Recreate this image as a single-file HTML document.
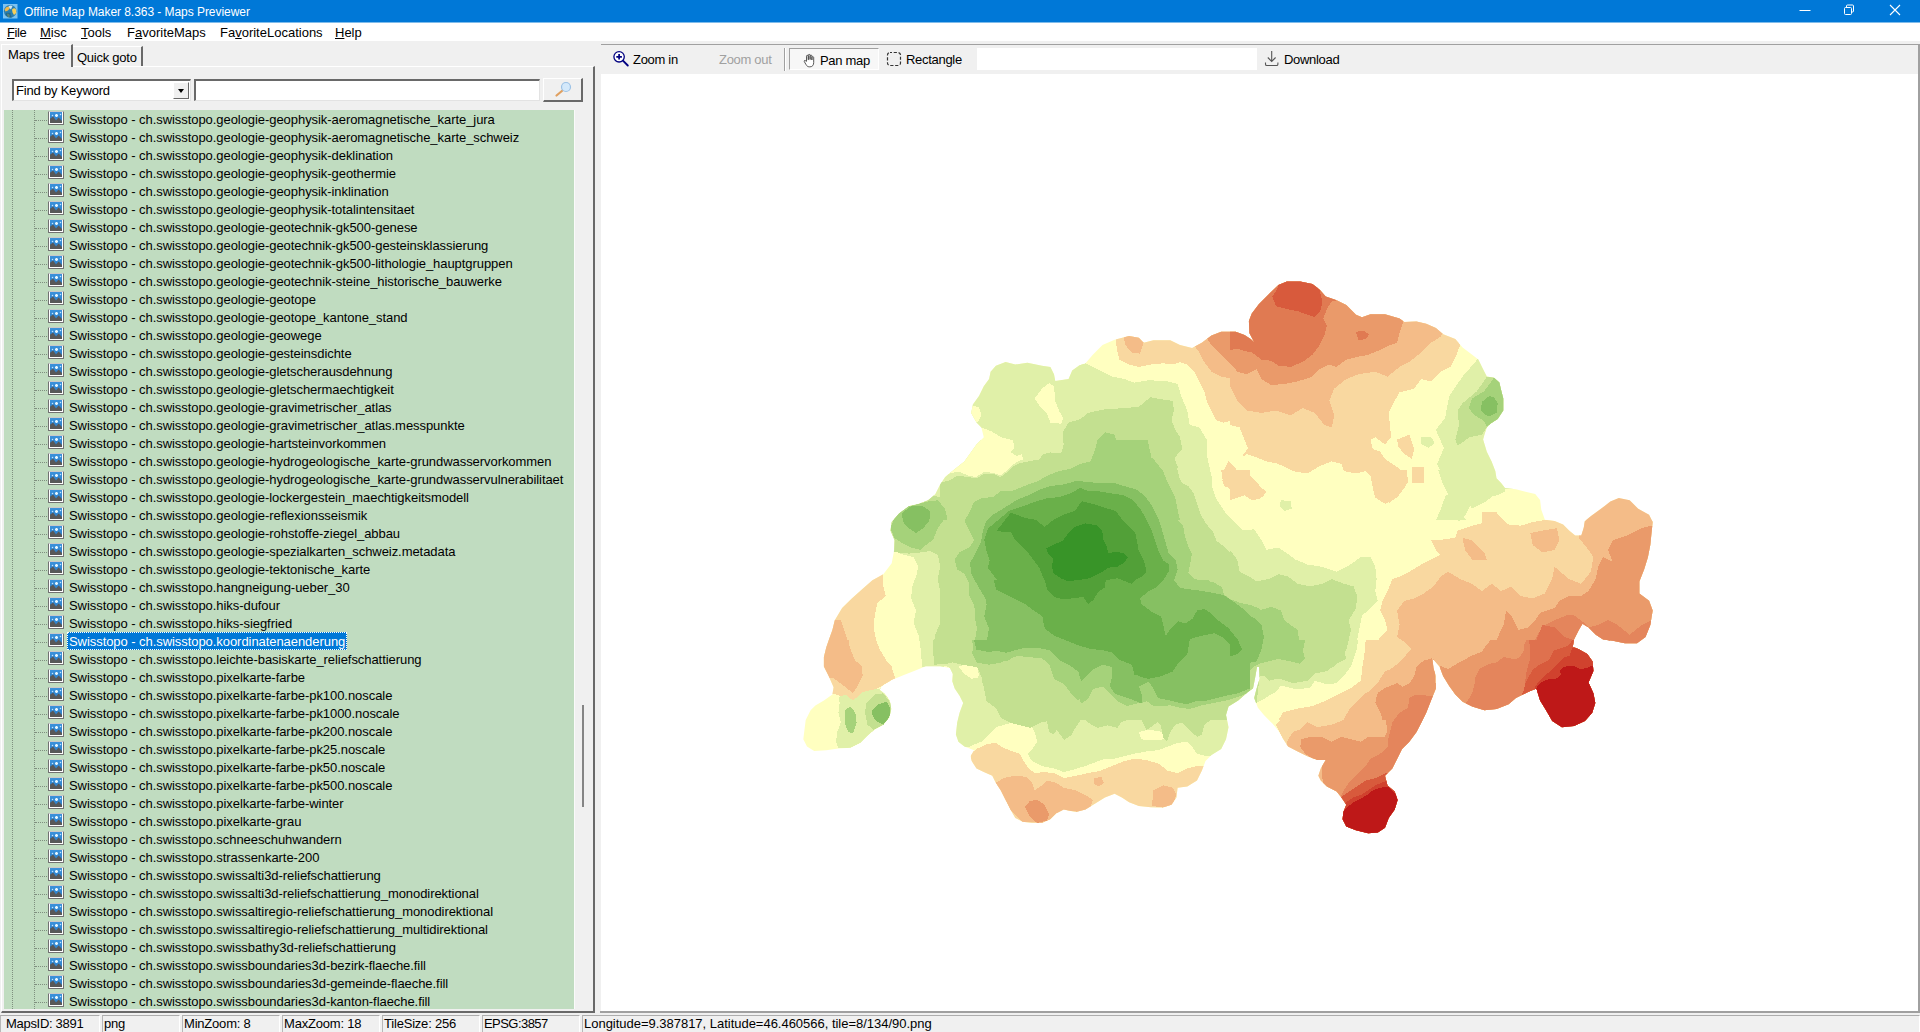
<!DOCTYPE html>
<html lang="en">
<head>
<meta charset="utf-8">
<title>Offline Map Maker 8.363 - Maps Previewer</title>
<style>
*{box-sizing:border-box;margin:0;padding:0}
html,body{width:1920px;height:1032px;overflow:hidden;background:#f0f0f0}
body{position:relative;font-family:"Liberation Sans",sans-serif;font-size:13px;color:#000}
.abs{position:absolute}
#title{left:0;top:0;width:1920px;height:23px;background:#0078d7;border-bottom:1px solid #7fbceb;color:#fff;font-size:12px}
#title .txt{position:absolute;left:24px;top:5px;white-space:nowrap;letter-spacing:-0.05px}
#appico{position:absolute;left:3px;top:3px;width:16px;height:16px}
.wbtn{position:absolute;top:0;height:23px}
#menu{left:0;top:23px;width:1920px;height:18px;background:#fff}
#menu span{position:absolute;top:2px;white-space:nowrap}
#menu u{text-decoration:underline;text-underline-offset:1px}
/* tabs */
#tabpage{left:1px;top:66px;width:594px;height:947px;border-top:1px solid #fff;border-left:1px solid #fff;border-right:2px solid #696969;border-bottom:2px solid #696969}
.tab{position:absolute;white-space:nowrap}
#tab1{left:1px;top:44px;width:72px;height:23px;background:#f0f0f0;border-top:1px solid #fff;border-left:1px solid #fff;border-right:2px solid #696969;}
#tab1 span{position:absolute;left:6px;top:2px;letter-spacing:-0.1px}
#tab2{left:73px;top:46px;width:70px;height:20px;border-top:1px solid #fff;border-right:2px solid #696969}
#tab2 span{position:absolute;left:4px;top:3px;letter-spacing:-0.25px}
#combo{left:12px;top:79px;width:179px;height:22px;background:#fff;border:1px solid #696969;border-top:2px solid #696969;border-left:2px solid #696969;border-right-color:#e3e3e3;border-bottom-color:#e3e3e3}
#combo span{position:absolute;left:2px;top:2px;letter-spacing:-0.2px}
#combo .dd{position:absolute;right:1px;top:1px;width:16px;height:17px;background:#f0f0f0;border:1px solid #fff;border-right-color:#696969;border-bottom-color:#696969}
#combo .dd:after{content:"";position:absolute;left:4px;top:6px;border-left:3.5px solid transparent;border-right:3.5px solid transparent;border-top:4px solid #000}
#kw{left:194px;top:79px;width:346px;height:22px;background:#fff;border:1px solid #e3e3e3;border-top:2px solid #696969;border-left:2px solid #696969}
#sbtn{left:543px;top:78px;width:40px;height:24px;background:#f0f0f0;border:1px solid #fff;border-right:2px solid #696969;border-bottom:2px solid #696969}
#tree{left:4px;top:110px;width:571px;height:899px;background:#c0dcc0;overflow:hidden;border-right:1px solid #fafafa}
#tree .v1{position:absolute;left:8px;top:0;height:899px;border-left:1px dotted #7f8f7f}
#tree .v2{position:absolute;left:30px;top:0;height:899px;border-left:1px dotted #7f8f7f}
.row{position:relative;height:18px;white-space:nowrap}
.row:before{content:"";position:absolute;left:31px;top:10px;width:12px;border-top:1px dotted #7f8f7f}
.row .ic{position:absolute;left:44px;top:1px;width:16px;height:14px;background:#fff;border:1px solid #707070;border-top-color:#c8c8c8;border-radius:1px}
.row .ic:before{content:"";position:absolute;left:1px;top:0;width:12px;height:11px;background:radial-gradient(circle at 2.5px 3.5px,#bfe4ff 0.5px,transparent 1.1px),radial-gradient(circle at 6.5px 3.5px,#e8f8ff 1.1px,transparent 1.7px),radial-gradient(circle at 10.5px 2.5px,#bfe4ff 0.5px,transparent 1.1px),linear-gradient(#3a92dc,#2c7cc4)}
.row .ic:after{content:"";position:absolute;left:1px;top:0;width:12px;height:11px;background:#585858;clip-path:polygon(0 100%,0 62%,26% 42%,50% 78%,72% 50%,100% 82%,100% 100%)}
.row .lbl{position:absolute;left:63px;top:0;height:18px;line-height:19px;padding:0 2px;letter-spacing:-0.06px}
.row.sel .lbl{background:#0078d7;color:#fff;outline:1px dotted #fff;outline-offset:-1px}
#thumb{left:582px;top:705px;width:2px;height:102px;background:#858585}
/* right */
#rtop{left:601px;top:44px;width:1319px;height:2px;background:#a0a0a0;border-bottom:1px solid #e8e8e8}
#tb{left:601px;top:45px;width:1317px;height:29px;background:#f0f0f0}
#tb .t{position:absolute;top:7px;white-space:nowrap;letter-spacing:-0.3px}
#mapbox{left:601px;top:74px;width:1317px;height:937px;background:#fff}
#rb{left:1918px;top:45px;width:2px;height:968px;background:#a0a0a0}
#bb{left:600px;top:1011px;width:1320px;height:2px;background:#a0a0a0}
.sp{position:absolute;top:1015px;height:17px;border-left:1px solid #b8b8b8;border-top:1px solid #adadad;border-right:1px solid #fff;white-space:nowrap;line-height:16px;padding-left:4px;font-size:13px;letter-spacing:-0.2px}

</style>
</head>
<body>
<div id="title" class="abs"><svg id="appico" viewBox="0 0 16 16"><rect x="0" y="1" width="14.500" height="14.500" fill="#7cc3f2"/><circle cx="7.200" cy="8.300" r="6.300" fill="#2a7fb0"/><path d="M1.500 6.500Q3 3.500 5.500 3.500L7 5 5 7.500 2.500 8.500Z" fill="#f0b84a"/><path d="M9 6.500Q11.500 4 13 6.500L13.300 10 11 12 9.500 9.500Z" fill="#f5cf5a"/><path d="M4 10.500l2 .5 1 2-1.500 1.500Q4 13.500 4 10.500Z" fill="#e8d060"/><path d="M5.500 3.200Q7.500 1.800 9.500 3L8 6.500 6.500 5Z" fill="#cfe8f5"/><path d="M2.500 12Q5 15.500 9 14.500 7 12 7.500 10 5 9.500 3 10Z" fill="#1d5f80" opacity=".7"/></svg><span class="txt">Offline Map Maker 8.363 - Maps Previewer</span>
<svg class="wbtn" style="left:1782px" width="46" height="23"><path d="M17.5 10.5h11" stroke="#fff" stroke-width="1"/></svg>
<svg class="wbtn" style="left:1828px" width="46" height="23"><rect x="16.500" y="7.500" width="7" height="7" rx="1" fill="none" stroke="#fff"/><path d="M18.500 7.500v-1.500a1 1 0 0 1 1-1h5a1 1 0 0 1 1 1v5a1 1 0 0 1-1 1h-1" fill="none" stroke="#fff"/></svg>
<svg class="wbtn" style="left:1874px" width="46" height="23"><path d="M16 5l10 10M26 5l-10 10" stroke="#fff" stroke-width="1.100"/></svg>
</div>
<div id="menu" class="abs"><span style="left:7px;letter-spacing:-0.4px"><u>F</u>ile</span><span style="left:40px"><u>M</u>isc</span><span style="left:81px"><u>T</u>ools</span><span style="left:127px">F<u>a</u>voriteMaps</span><span style="left:220px">Fa<u>v</u>oriteLocations</span><span style="left:335px"><u>H</u>elp</span></div>
<div id="tabpage" class="abs"></div>
<div id="tab2" class="abs tab"><span>Quick goto</span></div>
<div id="tab1" class="abs tab"><span>Maps tree</span></div>
<div id="combo" class="abs"><span>Find by Keyword</span><div class="dd"></div></div>
<div id="kw" class="abs"></div>
<div id="sbtn" class="abs"><svg width="37" height="21" viewBox="0 0 37 21"><path d="M12.500 16.500l6-5" stroke="#e0a060" stroke-width="2.200" stroke-linecap="round"/><circle cx="22" cy="8" r="4.500" fill="#d4e9fb" stroke="#9cc2e6" stroke-width="1.200"/></svg></div>
<div id="tree" class="abs"><div class="v1"></div><div class="v2"></div>
<div class="row"><i class="ic"></i><span class="lbl">Swisstopo - ch.swisstopo.geologie-geophysik-aeromagnetische_karte_jura</span></div>
<div class="row"><i class="ic"></i><span class="lbl">Swisstopo - ch.swisstopo.geologie-geophysik-aeromagnetische_karte_schweiz</span></div>
<div class="row"><i class="ic"></i><span class="lbl">Swisstopo - ch.swisstopo.geologie-geophysik-deklination</span></div>
<div class="row"><i class="ic"></i><span class="lbl">Swisstopo - ch.swisstopo.geologie-geophysik-geothermie</span></div>
<div class="row"><i class="ic"></i><span class="lbl">Swisstopo - ch.swisstopo.geologie-geophysik-inklination</span></div>
<div class="row"><i class="ic"></i><span class="lbl">Swisstopo - ch.swisstopo.geologie-geophysik-totalintensitaet</span></div>
<div class="row"><i class="ic"></i><span class="lbl">Swisstopo - ch.swisstopo.geologie-geotechnik-gk500-genese</span></div>
<div class="row"><i class="ic"></i><span class="lbl">Swisstopo - ch.swisstopo.geologie-geotechnik-gk500-gesteinsklassierung</span></div>
<div class="row"><i class="ic"></i><span class="lbl">Swisstopo - ch.swisstopo.geologie-geotechnik-gk500-lithologie_hauptgruppen</span></div>
<div class="row"><i class="ic"></i><span class="lbl">Swisstopo - ch.swisstopo.geologie-geotechnik-steine_historische_bauwerke</span></div>
<div class="row"><i class="ic"></i><span class="lbl">Swisstopo - ch.swisstopo.geologie-geotope</span></div>
<div class="row"><i class="ic"></i><span class="lbl">Swisstopo - ch.swisstopo.geologie-geotope_kantone_stand</span></div>
<div class="row"><i class="ic"></i><span class="lbl">Swisstopo - ch.swisstopo.geologie-geowege</span></div>
<div class="row"><i class="ic"></i><span class="lbl">Swisstopo - ch.swisstopo.geologie-gesteinsdichte</span></div>
<div class="row"><i class="ic"></i><span class="lbl">Swisstopo - ch.swisstopo.geologie-gletscherausdehnung</span></div>
<div class="row"><i class="ic"></i><span class="lbl">Swisstopo - ch.swisstopo.geologie-gletschermaechtigkeit</span></div>
<div class="row"><i class="ic"></i><span class="lbl">Swisstopo - ch.swisstopo.geologie-gravimetrischer_atlas</span></div>
<div class="row"><i class="ic"></i><span class="lbl">Swisstopo - ch.swisstopo.geologie-gravimetrischer_atlas.messpunkte</span></div>
<div class="row"><i class="ic"></i><span class="lbl">Swisstopo - ch.swisstopo.geologie-hartsteinvorkommen</span></div>
<div class="row"><i class="ic"></i><span class="lbl">Swisstopo - ch.swisstopo.geologie-hydrogeologische_karte-grundwasservorkommen</span></div>
<div class="row"><i class="ic"></i><span class="lbl">Swisstopo - ch.swisstopo.geologie-hydrogeologische_karte-grundwasservulnerabilitaet</span></div>
<div class="row"><i class="ic"></i><span class="lbl">Swisstopo - ch.swisstopo.geologie-lockergestein_maechtigkeitsmodell</span></div>
<div class="row"><i class="ic"></i><span class="lbl">Swisstopo - ch.swisstopo.geologie-reflexionsseismik</span></div>
<div class="row"><i class="ic"></i><span class="lbl">Swisstopo - ch.swisstopo.geologie-rohstoffe-ziegel_abbau</span></div>
<div class="row"><i class="ic"></i><span class="lbl">Swisstopo - ch.swisstopo.geologie-spezialkarten_schweiz.metadata</span></div>
<div class="row"><i class="ic"></i><span class="lbl">Swisstopo - ch.swisstopo.geologie-tektonische_karte</span></div>
<div class="row"><i class="ic"></i><span class="lbl">Swisstopo - ch.swisstopo.hangneigung-ueber_30</span></div>
<div class="row"><i class="ic"></i><span class="lbl">Swisstopo - ch.swisstopo.hiks-dufour</span></div>
<div class="row"><i class="ic"></i><span class="lbl">Swisstopo - ch.swisstopo.hiks-siegfried</span></div>
<div class="row sel"><i class="ic"></i><span class="lbl">Swisstopo - ch.swisstopo.koordinatenaenderung</span></div>
<div class="row"><i class="ic"></i><span class="lbl">Swisstopo - ch.swisstopo.leichte-basiskarte_reliefschattierung</span></div>
<div class="row"><i class="ic"></i><span class="lbl">Swisstopo - ch.swisstopo.pixelkarte-farbe</span></div>
<div class="row"><i class="ic"></i><span class="lbl">Swisstopo - ch.swisstopo.pixelkarte-farbe-pk100.noscale</span></div>
<div class="row"><i class="ic"></i><span class="lbl">Swisstopo - ch.swisstopo.pixelkarte-farbe-pk1000.noscale</span></div>
<div class="row"><i class="ic"></i><span class="lbl">Swisstopo - ch.swisstopo.pixelkarte-farbe-pk200.noscale</span></div>
<div class="row"><i class="ic"></i><span class="lbl">Swisstopo - ch.swisstopo.pixelkarte-farbe-pk25.noscale</span></div>
<div class="row"><i class="ic"></i><span class="lbl">Swisstopo - ch.swisstopo.pixelkarte-farbe-pk50.noscale</span></div>
<div class="row"><i class="ic"></i><span class="lbl">Swisstopo - ch.swisstopo.pixelkarte-farbe-pk500.noscale</span></div>
<div class="row"><i class="ic"></i><span class="lbl">Swisstopo - ch.swisstopo.pixelkarte-farbe-winter</span></div>
<div class="row"><i class="ic"></i><span class="lbl">Swisstopo - ch.swisstopo.pixelkarte-grau</span></div>
<div class="row"><i class="ic"></i><span class="lbl">Swisstopo - ch.swisstopo.schneeschuhwandern</span></div>
<div class="row"><i class="ic"></i><span class="lbl">Swisstopo - ch.swisstopo.strassenkarte-200</span></div>
<div class="row"><i class="ic"></i><span class="lbl">Swisstopo - ch.swisstopo.swissalti3d-reliefschattierung</span></div>
<div class="row"><i class="ic"></i><span class="lbl">Swisstopo - ch.swisstopo.swissalti3d-reliefschattierung_monodirektional</span></div>
<div class="row"><i class="ic"></i><span class="lbl">Swisstopo - ch.swisstopo.swissaltiregio-reliefschattierung_monodirektional</span></div>
<div class="row"><i class="ic"></i><span class="lbl">Swisstopo - ch.swisstopo.swissaltiregio-reliefschattierung_multidirektional</span></div>
<div class="row"><i class="ic"></i><span class="lbl">Swisstopo - ch.swisstopo.swissbathy3d-reliefschattierung</span></div>
<div class="row"><i class="ic"></i><span class="lbl">Swisstopo - ch.swisstopo.swissboundaries3d-bezirk-flaeche.fill</span></div>
<div class="row"><i class="ic"></i><span class="lbl">Swisstopo - ch.swisstopo.swissboundaries3d-gemeinde-flaeche.fill</span></div>
<div class="row"><i class="ic"></i><span class="lbl">Swisstopo - ch.swisstopo.swissboundaries3d-kanton-flaeche.fill</span></div>
</div>
<div id="thumb" class="abs"></div>
<div id="rtop" class="abs"></div>
<div id="tb" class="abs">
<svg class="abs" style="left:11px;top:5px" width="18" height="18" viewBox="0 0 18 18"><circle cx="7.100" cy="6.800" r="5.200" fill="#fff" stroke="#000080" stroke-width="1.300"/><path d="M7.100 4v5.600M4.300 6.800h5.600" stroke="#000080" stroke-width="1.700"/><path d="M11.200 10.900l4.600 4.600" stroke="#000080" stroke-width="1.900" stroke-linecap="round"/></svg>
<span class="t" style="left:32px">Zoom in</span>
<span class="t" style="left:118px;color:#a0a0a0">Zoom out</span>
<div class="abs" style="left:183px;top:3px;width:1px;height:23px;background:#a0a0a0"></div>
<div class="abs" style="left:184px;top:3px;width:1px;height:23px;background:#fff"></div>
<div class="abs" style="left:188px;top:3px;width:90px;height:22px;background:#f7f7f7;border-left:1px solid #a0a0a0;border-top:1px solid #a0a0a0;border-right:1px solid #fff;border-bottom:1px solid #fff"></div>
<svg class="abs" style="left:201px;top:8px" width="14" height="15" viewBox="0 0 14 15"><path d="M4.500 8V3.200a.9.900 0 0 1 1.800 0V7M6.300 6.500V2.300a.9.900 0 0 1 1.800 0V6.500M8.100 6.500V3a.9.900 0 0 1 1.800 0V7M9.900 7V4.600a.9.900 0 0 1 1.800 0V9.500c0 2.500-1.200 4.300-3.600 4.300H7.300c-1.600 0-2.400-.8-3.200-2.100L2.300 8.600c-.5-.9.600-1.700 1.300-.9l.9 1.100" fill="#fff" stroke="#444" stroke-width=".9" stroke-linejoin="round"/></svg>
<span class="t" style="left:219px;top:8px">Pan map</span>
<svg class="abs" style="left:285px;top:6px" width="16" height="16" viewBox="0 0 16 16"><rect x="1.500" y="1.500" width="13" height="13" rx="2.500" fill="none" stroke="#333" stroke-width="1.200" stroke-dasharray="3.200 1.700" stroke-dashoffset="1.200"/></svg>
<span class="t" style="left:305px">Rectangle</span>
<div class="abs" style="left:376px;top:3px;width:280px;height:22px;background:#fff"></div>
<svg class="abs" style="left:663px;top:5px" width="16" height="17" viewBox="0 0 16 17"><path d="M7.700 1v10.300M3.800 7.500l3.900 3.900 3.900-3.900" fill="none" stroke="#555" stroke-width="1.100"/><path d="M1.500 12.500v1.700a1.300 1.300 0 0 0 1.300 1.300h9.800a1.300 1.300 0 0 0 1.300-1.300v-1.700" fill="none" stroke="#555" stroke-width="1.100"/></svg>
<span class="t" style="left:683px">Download</span>
</div>
<div id="mapbox" class="abs"><svg width="1317" height="937" viewBox="601 74 1317 937" shape-rendering="crispEdges" style="position:absolute;left:0;top:0">
<defs><clipPath id="ch"><path d="M949.9 473.0L964.4 461.4L976.5 444.4L983.8 437.2L981.4 427.5L976.5 422.6L971.2 412.9L972.9 404.5L979.0 396.0L983.8 386.3L989.1 379.0L990.6 371.7L995.9 365.7L1005.6 362.0L1015.3 364.5L1027.4 362.8L1041.9 365.7L1050.4 366.9L1054.0 374.2L1055.3 381.0L1068.6 379.0L1072.2 370.5L1079.5 365.2L1085.5 363.3L1092.8 354.8L1102.5 345.1L1114.6 339.8L1129.1 335.9L1138.8 337.8L1143.7 342.7L1153.4 340.3L1170.3 340.3L1180.0 345.1L1192.1 348.0L1201.8 342.7L1211.5 335.4L1221.2 331.8L1235.7 331.8L1244.5 335.0L1250.6 339.0L1254.2 342.2L1249.4 333.0L1248.9 320.9L1251.8 313.6L1259.0 303.9L1270.0 293.0L1278.4 285.0L1286.9 281.4L1300.2 281.4L1312.4 284.0L1319.6 289.4L1325.7 296.6L1336.6 300.3L1346.3 305.1L1356.0 314.8L1362.0 317.2L1370.5 314.3L1385.0 314.3L1399.6 318.4L1404.4 322.1L1416.5 321.4L1426.2 323.8L1435.9 328.1L1443.2 334.2L1455.3 339.0L1462.6 347.5L1472.2 354.8L1478.3 359.6L1483.1 369.3L1486.8 376.6L1494.0 377.8L1499.4 382.6L1500.8 388.7L1503.3 398.4L1503.3 410.5L1497.7 419.0L1490.4 423.8L1486.8 427.5L1484.4 434.7L1483.1 439.6L1486.8 451.7L1491.6 461.4L1495.3 471.1L1496.5 478.3L1501.3 483.2L1505.0 488.0L1515.9 489.2L1525.5 491.7L1535.2 494.1L1540.1 500.1L1541.3 509.8L1544.9 519.7L1554.6 520.9L1563.1 524.5L1569.1 530.6L1575.2 535.4L1581.3 535.4L1583.7 528.1L1584.9 520.9L1591.0 516.0L1604.3 506.3L1610.3 501.5L1618.8 497.9L1629.7 500.3L1638.2 508.8L1649.1 514.8L1652.7 522.1L1651.5 533.0L1650.3 545.1L1647.9 557.2L1644.2 569.3L1639.4 581.4L1639.4 593.5L1649.1 600.8L1652.7 610.5L1650.3 625.0L1645.5 637.1L1637.0 643.2L1624.9 643.2L1612.8 640.8L1603.1 639.6L1595.8 634.7L1588.5 627.5L1582.5 623.8L1578.8 629.9L1574.0 639.6L1572.8 646.8L1578.8 649.3L1587.3 654.1L1592.6 661.4L1593.4 671.1L1588.5 682.4L1593.4 693.3L1595.3 703.0L1592.2 712.7L1584.9 721.1L1574.0 726.0L1561.9 727.2L1552.2 721.1L1546.1 710.2L1540.1 700.6L1536.4 688.4L1528.0 692.1L1515.9 698.1L1508.6 704.2L1496.5 709.0L1484.4 710.2L1472.2 706.6L1462.6 701.8L1455.3 694.5L1449.2 686.0L1443.2 676.3L1439.5 666.6L1432.3 658.2L1433.5 668.0L1435.9 676.3L1435.9 688.4L1431.0 700.6L1426.2 712.7L1421.4 722.4L1416.5 732.0L1409.3 741.7L1402.0 749.0L1397.2 758.7L1392.3 768.4L1385.0 775.7L1387.5 785.4L1394.7 791.4L1397.6 799.9L1394.7 809.6L1388.7 818.0L1385.0 827.7L1377.8 832.6L1368.1 833.3L1356.0 830.2L1346.3 826.5L1342.6 819.3L1343.4 812.0L1346.3 804.7L1341.4 797.5L1336.6 791.4L1326.9 786.6L1320.8 780.5L1318.4 775.7L1320.8 768.4L1325.7 759.9L1317.2 759.9L1307.5 756.3L1297.8 751.4L1288.1 746.6L1283.3 739.3L1278.4 730.8L1272.4 723.6L1263.9 715.1L1257.9 707.8L1254.2 698.1L1256.6 688.4L1259.6 678.8L1259.0 667.0L1257.0 667.0L1255.4 676.3L1253.0 688.4L1247.9 692.1L1238.2 700.6L1228.5 706.6L1226.0 715.1L1228.5 727.2L1226.0 739.3L1221.2 749.0L1211.5 755.1L1205.5 761.1L1201.8 770.8L1197.0 780.5L1187.3 786.6L1177.6 787.8L1176.4 797.5L1171.5 804.7L1163.1 807.6L1150.9 807.2L1138.8 805.9L1129.1 802.3L1121.9 797.5L1114.6 793.8L1104.9 797.5L1095.2 803.5L1085.5 809.6L1075.8 812.0L1063.7 809.6L1056.5 813.2L1050.4 819.3L1041.9 822.9L1032.2 822.9L1022.6 821.7L1015.3 818.0L1010.4 809.6L1005.6 799.9L1000.7 790.2L995.9 782.9L992.3 775.7L983.8 772.0L976.5 768.4L971.7 761.1L970.5 756.3L974.1 750.2L964.4 746.6L958.4 741.7L955.9 734.5L957.2 722.4L959.6 712.7L963.2 703.0L959.6 695.7L954.7 688.4L952.3 681.2L952.8 673.9L949.9 667.9L940.2 666.2L925.7 666.2L916.0 670.3L903.9 675.1L891.7 680.0L882.1 686.0L879.6 689.7L885.7 694.5L889.8 700.6L891.3 709.0L889.3 717.5L883.3 724.8L874.8 729.6L867.5 735.7L860.3 743.0L850.6 747.8L838.4 748.5L826.3 750.2L814.2 751.0L807.0 746.6L803.3 739.3L804.5 729.6L805.7 719.9L810.6 710.2L815.4 705.4L823.9 700.6L832.4 694.5L833.6 687.2L828.8 676.3L823.9 666.6L823.9 657.0L826.3 647.3L828.8 640.0L832.4 629.9L834.8 620.2L842.1 608.1L851.8 598.4L862.7 588.7L872.4 580.2L883.3 574.2L891.7 563.3L894.2 550.0L894.6 540.3L890.5 530.6L891.7 522.1L899.0 513.6L908.7 506.3L918.4 503.9L928.1 500.3L935.3 494.2L940.2 484.5L945.0 477.3Z"/></clipPath></defs>
<g clip-path="url(#ch)">
<rect x="790" y="270" width="880" height="580" fill="#ffffc0"/>
<path fill="#f9d8a0" d="M1230.0 270.0L1351.1 270.0L1457.7 318.4L1457.7 340.2L1460.1 345.1L1456.5 354.8L1450.4 366.9L1440.7 371.7L1431.1 381.4L1421.4 379.0L1414.1 388.7L1399.6 392.3L1394.7 400.8L1388.7 412.9L1389.9 425.0L1391.1 437.1L1385.0 444.4L1375.3 437.1L1370.5 439.6L1372.9 449.3L1380.2 451.7L1385.0 458.9L1392.3 463.8L1399.6 468.6L1406.8 478.3L1404.4 488.0L1397.1 497.7L1385.0 503.8L1375.3 497.7L1372.9 488.0L1370.5 475.9L1365.7 471.1L1356.0 473.5L1343.8 471.1L1341.4 463.8L1331.7 461.4L1319.6 466.2L1307.5 473.5L1293.0 471.1L1278.4 463.8L1266.3 461.4L1254.2 456.5L1247.0 454.1L1243.3 456.5L1248.2 449.3L1244.5 439.6L1239.7 427.5L1230.0 425.0Z M1230.0 471.1L1237.3 475.9L1244.5 483.2L1254.2 488.0L1263.9 491.6L1259.1 498.9L1251.8 500.1L1244.5 495.3L1237.3 497.7L1230.0 500.1Z M1397.1 439.6L1409.3 434.7L1414.1 449.3L1411.7 458.9L1404.4 454.1L1398.4 446.8Z M1411.7 467.4L1423.8 467.4L1423.8 483.2L1411.7 483.2Z M1481.9 512.2L1496.5 512.2L1498.9 520.0L1481.9 520.0Z M1690.0 519.7L1690.0 720.0L1278.4 720.0L1283.3 712.2L1297.8 708.6L1312.4 706.2L1326.9 700.1L1341.4 692.9L1351.1 688.0L1360.8 680.7L1365.7 673.5L1365.7 663.8L1370.5 654.1L1375.3 644.4L1380.2 637.1L1387.5 629.9L1385.0 620.2L1380.2 610.5L1382.6 600.8L1387.5 591.1L1392.3 579.0L1399.6 576.6L1409.3 571.7L1421.4 564.5L1431.1 559.6L1440.7 554.8L1435.9 549.9L1431.1 540.2L1438.3 540.2L1455.3 537.8L1457.7 530.6L1472.2 525.7L1481.9 523.3L1483.1 513.6L1496.5 513.6L1508.6 524.5L1520.7 525.7L1532.8 522.1L1547.3 519.7Z M1230.0 470.0L1244.5 470.0L1254.2 479.7L1265.1 491.8L1259.1 499.1L1251.8 495.4L1244.5 489.4L1237.3 487.0L1230.0 484.5Z M1370.5 470.0L1406.8 470.0L1408.0 482.1L1399.6 494.2L1389.9 502.7L1377.8 499.1L1372.9 489.4L1371.7 479.7Z M1411.7 470.0L1423.8 470.0L1423.8 482.1L1411.7 482.1Z M1690.0 640.0L1690.0 890.0L1254.2 890.0L1282.1 736.9L1276.0 724.8L1280.9 719.9L1288.1 712.7L1300.2 717.5L1309.9 715.1L1322.0 710.2L1331.7 703.0L1341.4 695.7L1351.1 688.4L1360.8 683.6L1362.0 669.1L1364.4 654.5L1365.7 640.0Z M876.0 640.0L877.2 649.7L884.5 659.4L891.7 666.6L894.6 677.5L882.0 686.0L874.8 689.7L865.1 692.1L860.2 699.3L853.0 700.6L843.3 695.7L834.8 692.1L814.2 688.4L814.2 640.0Z M970.5 753.8L976.5 749.0L986.2 744.2L995.9 742.9L1003.2 747.8L1012.9 751.4L1020.1 753.8L1023.8 761.1L1028.6 768.4L1034.7 773.2L1044.3 772.0L1054.0 773.2L1063.7 778.1L1075.8 775.7L1087.9 773.2L1100.1 770.8L1112.2 766.0L1124.3 761.1L1134.0 758.7L1146.1 759.9L1158.2 763.5L1167.9 770.8L1177.6 773.2L1187.3 768.4L1197.0 766.0L1204.2 766.0L1204.2 833.8L970.5 833.8Z M883.3 572.9L883.3 586.3L885.7 596.0L877.2 603.2L874.8 615.3L873.6 627.5L876.0 639.6L879.6 649.3L886.9 661.4L892.9 671.1L895.4 678.3L882.0 685.6L862.7 692.9L850.6 698.9L838.4 695.3L814.2 688.0L814.2 572.9Z M1250.0 470.0L1250.0 496.6L1243.0 494.2L1233.3 489.4L1223.6 482.1L1221.2 470.0Z M1114.6 270.0L1250.0 270.0L1250.0 420.2L1243.0 417.8L1233.3 420.2L1223.6 422.6L1216.3 420.2L1211.5 410.5L1206.6 400.8L1204.2 391.1L1199.4 381.4L1194.5 371.7L1187.3 364.5L1180.0 362.0L1172.7 364.5L1163.0 363.3L1150.9 364.5L1138.8 366.9L1129.1 364.5L1119.4 359.6L1117.0 349.9L1115.8 340.2Z M1223.6 471.1L1228.4 461.4L1235.7 468.6L1243.0 478.3L1250.0 483.2L1250.0 495.3L1238.1 492.9L1228.4 488.0L1222.4 480.7Z M1280.0 440.0L1280.0 464.8L1269.9 459.5L1259.2 454.2L1248.6 452.4L1241.5 456.8L1247.7 448.9L1247.7 440.0Z M1222.0 475.5L1227.3 463.1L1232.6 471.9L1239.7 479.0L1248.6 484.3L1259.2 486.1L1266.3 491.4L1262.8 496.8L1253.9 500.3L1248.6 493.2L1239.7 491.4L1230.9 487.9L1223.8 486.1Z"/>
<path fill="#f4bc88" d="M1581.2 520.0L1603.0 500.1L1620.0 492.9L1641.8 502.5L1656.3 520.0Z M1230.0 270.0L1351.1 270.0L1443.2 306.3L1443.2 333.0L1440.7 336.6L1431.1 342.7L1421.4 352.4L1409.3 362.0L1399.6 366.9L1387.5 376.6L1375.3 371.7L1358.4 374.2L1346.3 379.0L1334.2 388.7L1329.3 400.8L1334.2 415.3L1331.7 427.5L1324.5 425.0L1314.8 412.9L1302.7 408.1L1290.6 415.3L1276.0 410.5L1261.5 412.9L1247.0 410.5L1237.3 400.8L1230.0 386.3Z M1617.6 494.2L1690.0 494.2L1690.0 720.0L1346.3 720.0L1348.7 709.8L1356.0 702.5L1365.7 695.3L1377.8 683.2L1385.0 671.1L1394.7 668.6L1404.4 658.9L1411.7 649.3L1404.4 642.0L1397.1 637.1L1399.6 625.0L1397.1 610.5L1404.4 600.8L1414.1 598.4L1423.8 593.5L1433.5 586.3L1440.7 576.6L1448.0 571.7L1460.1 579.0L1472.2 583.8L1481.9 591.1L1491.6 583.8L1501.3 591.1L1511.0 586.3L1520.7 596.0L1532.8 598.4L1544.9 593.5L1552.2 579.0L1554.6 566.9L1569.1 579.0L1581.2 583.8L1590.9 571.7L1593.3 557.2L1588.5 549.9L1578.8 537.8L1583.7 522.1Z M1462.5 537.8L1472.2 540.2L1484.3 552.4L1486.8 559.6L1472.2 559.6L1465.0 549.9Z M1530.4 533.0L1542.5 530.6L1557.0 528.1L1559.4 540.2L1554.6 549.9L1542.5 552.4L1532.8 545.1Z M1690.0 640.0L1690.0 890.0L1285.7 890.0L1285.7 746.6L1288.1 739.3L1293.0 732.0L1300.2 729.6L1307.5 722.4L1317.2 727.2L1331.7 724.8L1343.8 719.9L1348.7 710.2L1356.0 703.0L1365.7 693.3L1375.3 688.4L1380.2 678.8L1387.5 671.5L1397.1 664.2L1404.4 657.0L1410.5 649.7L1411.7 640.0Z M826.3 640.0L849.3 640.0L848.1 649.7L853.0 659.4L860.2 664.2L861.5 673.9L857.8 683.6L853.0 690.9L845.7 686.0L838.4 678.8L828.8 671.5L822.7 664.2L823.9 652.1Z M995.9 782.9L1003.2 778.1L1015.3 775.7L1026.2 776.9L1032.2 782.9L1034.7 790.2L1041.9 785.3L1046.8 780.5L1056.5 782.9L1063.7 787.8L1075.8 790.2L1085.5 795.0L1092.8 799.9L1090.4 807.1L1080.7 812.0L1068.6 810.8L1056.5 813.2L1050.4 819.3L1041.9 822.9L1022.5 821.7L1010.4 809.6Z M1153.3 790.2L1163.0 785.3L1172.7 787.8L1176.4 795.0L1172.7 804.7L1163.0 807.6L1152.1 805.9Z M1094.0 778.1L1101.3 776.9L1103.7 782.9L1098.8 786.6L1094.0 784.1Z M814.2 620.2L840.9 620.2L845.7 634.7L850.6 649.3L855.4 661.4L861.5 666.2L862.7 675.9L857.8 685.6L853.0 692.9L843.3 685.6L833.6 678.3L814.2 678.3Z M1138.8 335.4L1143.7 342.7L1140.0 353.6L1131.5 352.4L1125.5 345.1L1123.1 335.4Z M1192.1 318.4L1250.0 318.4L1250.0 405.7L1243.0 400.8L1238.1 391.1L1233.3 379.0L1221.2 376.6L1211.5 371.7L1204.2 362.0L1199.4 352.4L1192.1 342.7Z"/>
<path fill="#ea9a6a" d="M1230.0 270.0L1326.9 270.0L1403.2 294.2L1403.2 320.9L1402.0 325.7L1399.6 333.0L1397.1 342.7L1389.9 345.1L1380.2 349.9L1368.1 354.8L1356.0 357.2L1346.3 359.6L1336.6 366.9L1329.3 364.5L1319.6 369.3L1312.4 376.6L1297.8 381.4L1285.7 383.8L1271.2 385.1L1261.5 379.0L1256.6 369.3L1247.0 374.2L1237.3 371.7L1230.0 362.0Z M1690.0 525.7L1690.0 720.0L1448.0 720.0L1443.2 680.7L1445.6 673.5L1452.9 668.6L1460.1 663.8L1469.8 656.5L1481.9 651.7L1486.8 644.4L1496.5 639.6L1503.7 625.0L1506.1 610.5L1511.0 615.3L1518.3 629.9L1527.9 627.5L1535.2 620.2L1540.1 612.9L1554.6 608.1L1559.4 600.8L1569.1 596.0L1581.2 596.0L1588.5 591.1L1595.8 579.0L1598.2 566.9L1603.0 557.2L1612.7 562.0L1607.9 549.9L1612.7 540.2L1627.3 535.4L1641.8 528.1L1651.5 525.7Z M1435.9 688.0L1435.9 720.0L1382.6 720.0L1380.2 712.2L1375.3 702.5L1377.8 692.9L1385.0 688.0L1397.1 683.2L1404.4 688.0L1414.1 683.2L1416.5 671.1L1423.8 661.4L1433.5 658.9Z M1432.3 658.2L1435.9 688.4L1438.3 890.0L1325.7 890.0L1322.0 761.1L1312.4 758.7L1305.1 753.8L1300.2 746.6L1301.5 739.3L1309.9 736.9L1322.0 736.9L1331.7 741.7L1341.4 736.9L1351.1 739.3L1360.8 741.7L1368.1 736.9L1377.8 736.9L1385.0 736.9L1387.5 729.6L1385.0 717.5L1380.2 707.8L1375.3 698.1L1380.2 692.1L1389.9 693.3L1399.6 688.4L1409.3 683.6L1414.1 676.3L1416.5 666.6L1423.8 660.6Z M1439.5 665.4L1448.0 669.1L1460.1 661.8L1469.8 657.0L1481.9 652.1L1490.4 640.0L1690.0 640.0L1690.0 761.1L1440.7 761.1Z M1025.0 807.1L1029.8 801.1L1037.1 799.9L1044.3 804.7L1049.2 814.4L1046.8 820.5L1037.1 822.9L1029.8 816.8Z M1206.6 318.4L1250.0 318.4L1250.0 371.7L1240.6 369.3L1233.3 366.9L1226.0 359.6L1218.8 352.4L1211.5 345.1L1206.6 337.8Z"/>
<path fill="#e4855c" d="M1690.0 620.2L1690.0 720.0L1472.2 720.0L1466.2 706.2L1469.8 697.7L1474.7 688.0L1474.7 678.3L1479.5 668.6L1489.2 663.8L1501.3 661.4L1515.8 663.8L1523.1 651.7L1532.8 644.4L1537.6 634.7L1544.9 625.0L1554.6 620.2L1566.7 615.3L1574.0 615.3L1583.7 622.6L1588.5 627.5L1598.2 625.0L1607.9 620.2L1617.6 625.0L1629.7 634.7L1641.8 625.0L1651.5 620.2Z M1428.6 720.0L1406.8 720.0L1410.5 702.5L1416.5 695.3L1423.8 696.5L1435.9 697.7Z M1438.3 890.0L1340.2 890.0L1340.2 797.5L1343.8 790.2L1348.7 782.9L1356.0 775.7L1365.7 766.0L1370.5 758.7L1380.2 753.8L1387.5 746.6L1388.7 736.9L1392.3 722.4L1399.6 712.7L1408.0 707.8L1409.3 698.1L1416.5 694.5L1423.8 695.2L1438.3 696.9Z M1466.2 703.0L1472.2 693.3L1474.7 683.6L1477.1 676.3L1484.3 669.1L1494.0 664.2L1503.7 657.0L1515.8 659.4L1523.1 654.5L1524.3 644.8L1526.7 640.0L1690.0 640.0L1690.0 761.1L1466.2 761.1Z"/>
<path fill="#e07a52" d="M1230.0 270.0L1278.4 270.0L1336.6 282.1L1336.6 300.3L1331.7 301.5L1326.9 308.8L1323.3 318.4L1326.9 325.7L1324.5 335.4L1319.6 345.1L1312.4 354.8L1302.7 362.0L1290.6 366.9L1278.4 365.7L1271.2 360.8L1261.5 359.6L1251.8 352.4L1239.7 348.7L1230.0 349.9Z M1356.0 331.8L1363.2 330.6L1369.3 334.2L1365.7 339.0L1358.4 340.2Z M1238.1 318.4L1250.0 318.4L1250.0 352.4L1240.6 349.9L1238.1 340.2L1238.1 330.6Z"/>
<path fill="#df714e" d="M1593.3 639.6L1593.3 720.0L1520.7 720.0L1524.3 688.0L1526.7 671.1L1529.2 661.4L1534.0 649.3L1537.6 637.1L1542.5 625.0L1554.6 627.5L1564.3 637.1L1572.8 639.6Z M1593.3 640.0L1593.3 688.4L1536.4 688.4L1532.8 678.8L1529.2 666.6L1530.4 654.5L1529.2 640.0Z"/>
<path fill="#d85a3c" d="M1272.4 296.6L1278.4 287.0L1278.4 277.3L1312.4 277.3L1319.6 290.6L1322.5 301.5L1320.8 310.0L1314.8 317.2L1307.5 314.8L1297.8 311.2L1285.7 308.8L1276.0 306.3Z M1610.0 640.0L1600.0 740.0L1520.0 700.0L1523.5 690.6L1525.3 683.6L1528.8 676.6L1533.0 669.6L1538.4 665.3L1543.6 662.7L1548.8 660.0L1551.4 654.8L1554.0 650.5L1559.3 648.7L1564.5 647.0L1568.9 645.2L1572.4 640.0Z M1423.8 773.2L1423.8 858.0L1339.0 858.0L1339.0 799.9L1343.8 795.0L1351.1 790.2L1358.4 785.3L1365.7 780.5L1375.3 778.1L1386.2 773.2Z"/>
<path fill="#d0422e" d="M1600.0 648.0L1600.0 730.0L1535.0 730.0L1533.0 695.0L1535.0 687.0L1539.2 681.0L1543.6 676.6L1548.8 672.3L1552.3 668.8L1555.8 665.3L1561.0 660.0L1564.5 657.4L1569.7 655.7L1572.4 648.0Z M1423.8 780.5L1423.8 858.0L1341.4 858.0L1341.4 807.1L1346.3 802.3L1353.5 797.5L1360.8 795.0L1368.1 790.2L1375.3 785.3L1387.5 780.5Z"/>
<path fill="#be1818" d="M1600.0 665.0L1600.0 730.0L1535.0 730.0L1535.0 690.0L1537.5 686.0L1541.8 681.8L1548.8 679.2L1556.7 678.4L1561.0 675.0L1560.0 670.5L1563.0 667.0L1568.0 666.0L1574.0 666.0L1580.0 669.0L1587.0 668.0L1594.0 665.0Z M1423.8 795.0L1423.8 858.0L1341.4 858.0L1341.4 812.5L1347.5 807.1L1353.5 802.3L1360.8 798.7L1366.9 795.0L1372.9 790.2L1380.2 787.8L1387.5 786.6L1397.1 795.0Z"/>
<path fill="#e0f0a8" d="M1544.9 358.4L1544.9 488.0L1504.9 489.2L1494.0 495.3L1484.3 502.5L1472.2 508.6L1468.6 503.8L1469.8 491.6L1458.9 484.4L1444.4 478.3L1437.1 463.8L1443.9 448.0L1435.9 429.9L1445.1 417.8L1449.2 396.0L1462.5 376.6L1478.3 358.4Z M1435.9 520.0L1440.7 509.8L1445.6 495.3L1450.4 495.3L1452.9 506.2L1460.1 511.0L1466.2 520.0Z M1421.4 437.1L1431.1 437.1L1434.7 443.2L1428.6 448.0L1421.4 444.4Z M1280.9 500.1L1290.6 501.3L1291.8 508.6L1284.5 511.0L1279.7 506.2Z M1230.0 524.5L1242.1 530.6L1254.2 529.3L1261.5 540.2L1266.3 549.9L1278.4 547.5L1285.7 552.4L1295.4 559.6L1307.5 564.5L1322.0 566.9L1336.6 571.7L1348.7 565.7L1360.8 557.2L1370.5 557.2L1375.3 566.9L1376.6 579.0L1375.3 591.1L1377.8 600.8L1368.1 610.5L1362.0 615.3L1359.6 627.5L1357.2 639.6L1356.0 651.7L1351.1 666.2L1343.8 675.9L1336.6 683.2L1326.9 684.4L1314.8 680.7L1309.9 688.0L1295.4 689.2L1280.9 685.6L1276.0 691.6L1263.9 698.9L1256.6 702.5L1254.2 712.2L1257.9 720.0L1230.0 720.0Z M1438.3 470.0L1496.5 470.0L1503.7 482.1L1504.9 491.8L1494.0 496.6L1486.8 494.2L1481.9 501.5L1469.8 506.3L1465.0 516.0L1460.1 520.9L1448.0 518.4L1440.7 513.6L1443.2 503.9L1448.0 494.2L1443.2 484.5L1440.7 477.3Z M1358.4 640.0L1356.0 652.1L1351.1 664.2L1343.8 673.9L1334.2 678.8L1326.9 676.3L1317.2 678.8L1309.9 686.0L1302.7 688.4L1293.0 687.2L1280.9 683.6L1276.0 690.9L1266.3 695.7L1256.6 700.6L1254.2 707.8L1230.0 712.7L1230.0 640.0Z M1250.0 640.0L1250.0 756.3L1206.6 756.3L1197.0 753.8L1192.1 746.6L1187.3 741.7L1177.6 742.9L1167.9 746.6L1158.2 750.2L1146.1 751.4L1134.0 753.8L1124.3 756.3L1114.6 758.7L1104.9 758.7L1095.2 762.3L1085.5 766.0L1073.4 769.6L1063.7 772.0L1054.0 768.4L1041.9 766.0L1032.2 761.1L1027.4 753.8L1032.2 749.0L1037.1 741.7L1034.7 732.0L1029.8 723.6L1020.1 722.4L1008.0 723.6L995.9 727.2L988.6 734.5L981.4 741.7L969.3 746.6L959.6 746.6L957.1 744.2L935.3 712.7L949.9 667.1L935.3 664.2L922.0 663.0L920.8 652.1L920.8 640.0Z M838.4 696.9L845.7 694.5L853.0 700.6L862.7 692.1L872.4 689.7L880.8 688.4L891.7 703.0L891.7 717.5L884.5 726.0L874.8 729.6L867.5 735.7L860.2 742.9L850.6 747.8L838.4 748.5L836.0 741.7L837.2 732.0L840.9 722.4L838.4 712.7L839.7 703.0Z M1206.6 470.0L1209.1 484.5L1216.3 499.1L1226.0 513.6L1235.7 528.1L1243.0 542.7L1245.4 557.2L1240.6 566.9L1238.1 576.6L1243.0 583.8L1250.0 586.3L1250.0 720.0L957.1 720.0L959.6 702.5L954.7 688.0L952.3 671.1L947.5 666.2L935.3 667.4L922.0 667.4L922.0 661.4L920.8 649.3L918.4 634.7L913.5 622.6L916.0 610.5L911.1 598.4L912.3 586.3L916.0 576.6L918.4 566.9L913.5 557.2L903.8 554.8L894.2 551.1L886.9 551.1L886.9 518.4L935.3 493.0L947.5 484.5L957.1 479.7L959.6 470.0Z M886.9 520.0L925.7 488.0L945.0 484.4L959.6 478.3L968.0 483.2L975.3 478.3L983.8 480.3L993.5 475.9L1003.2 478.3L1015.3 471.1L1024.5 463.8L1023.0 456.5L1011.6 458.9L1010.4 439.6L1000.7 437.1L991.1 431.1L981.4 427.5L935.3 415.3L959.6 354.8L1032.2 349.9L1071.0 366.9L1085.5 363.3L1092.8 366.9L1102.5 371.7L1112.2 376.6L1124.3 379.0L1134.0 382.6L1148.5 380.2L1167.9 381.4L1177.6 383.8L1181.2 396.0L1187.3 410.5L1189.7 425.0L1199.4 427.5L1206.6 439.6L1206.6 454.1L1211.5 475.9L1211.5 488.0L1216.3 502.5L1223.6 520.0Z M940.0 440.0L1184.8 440.0L1188.3 448.9L1198.9 450.6L1206.0 457.7L1207.8 468.4L1209.6 479.0L1213.1 489.7L1216.7 500.3L1223.8 510.9L1232.6 519.8L1241.5 528.7L1250.4 539.3L1257.5 550.0L1261.0 560.6L1264.6 567.7L1271.7 564.2L1277.0 555.3L1280.0 553.5L1280.0 623.0L940.0 623.0Z M1226.4 580.0L1340.0 580.0L1340.0 667.2L1328.1 672.0L1316.0 676.9L1303.9 679.3L1291.8 684.2L1279.7 686.6L1267.6 681.7L1257.9 686.6L1254.2 696.3Z"/>
<path fill="#ffffc0" d="M958.4 666.6L969.3 663.0L977.7 666.6L978.9 676.3L971.7 678.8L964.4 673.9Z M1138.8 732.0L1148.5 729.6L1163.0 732.0L1164.2 739.3L1153.3 740.5L1141.2 739.3Z M959.6 666.2L969.3 663.8L977.7 667.4L977.7 678.3L969.3 675.9L963.2 672.3Z M1034.7 398.4L1041.9 388.7L1049.2 383.1L1054.0 386.3L1055.2 400.8L1058.9 410.5L1063.2 417.8L1061.3 423.8L1050.4 422.6L1046.8 412.9L1039.5 405.7Z M970.5 405.7L978.9 406.9L981.4 415.3L977.7 422.6L971.7 417.8Z M982.6 440.0L1012.7 440.0L1014.5 447.1L1010.9 452.4L1016.3 456.0L1021.6 454.2L1023.4 459.5L1018.0 461.3L1012.7 464.8L1007.4 470.2L1000.3 475.5L993.2 472.8L984.3 471.9L975.5 477.2L968.4 475.5L959.5 471.9L950.6 472.8L940.0 480.8L940.0 440.0Z"/>
<path fill="#c3e090" d="M1520.7 376.6L1520.7 425.0L1486.8 427.5L1481.9 434.7L1469.8 437.1L1457.7 445.6L1455.3 439.6L1458.9 425.0L1457.7 410.5L1462.5 403.2L1477.1 391.1L1486.8 376.6Z M1230.0 549.9L1237.3 559.6L1239.7 571.7L1249.4 576.6L1256.6 581.4L1268.8 579.0L1278.4 574.2L1288.1 576.6L1297.8 583.8L1309.9 586.3L1322.0 583.8L1331.7 579.0L1343.8 583.8L1353.5 586.3L1357.2 596.0L1356.0 608.1L1348.7 620.2L1351.1 629.9L1348.7 639.6L1343.8 649.3L1346.3 658.9L1336.6 663.8L1326.9 671.1L1314.8 673.5L1307.5 680.7L1293.0 683.2L1278.4 678.3L1268.8 680.7L1259.1 671.1L1256.6 668.6L1230.0 675.9Z M1348.7 640.0L1346.3 649.7L1341.4 659.4L1334.2 666.6L1326.9 669.1L1314.8 671.5L1307.5 676.3L1297.8 678.8L1285.7 676.3L1276.0 676.3L1266.3 673.9L1260.3 670.3L1256.6 703.0L1230.0 705.4L1230.0 640.0Z M866.3 703.0L874.8 694.5L883.3 693.3L890.5 703.0L890.5 715.1L883.3 724.8L873.6 729.6L867.5 724.8L865.1 712.7Z M1250.0 640.0L1250.0 706.6L1226.0 706.6L1223.6 710.2L1213.9 717.5L1204.2 724.8L1201.8 734.5L1197.0 736.9L1189.7 729.6L1182.4 722.4L1175.2 724.8L1170.3 732.0L1166.7 741.7L1163.0 736.9L1160.6 724.8L1153.3 717.5L1143.7 715.1L1134.0 717.5L1124.3 721.1L1114.6 724.8L1104.9 722.4L1100.1 717.5L1090.4 715.1L1080.7 719.9L1075.8 727.2L1071.0 735.7L1068.6 729.6L1063.7 722.4L1058.9 724.8L1054.0 734.5L1049.2 732.0L1046.8 719.9L1041.9 712.7L1032.2 710.2L1022.5 712.7L1012.9 710.2L1003.2 705.4L995.9 695.7L986.2 690.9L981.4 681.2L983.8 671.5L976.5 664.2L964.4 663.0L954.7 661.8L945.0 664.2L935.3 661.8L932.9 654.5L932.9 640.0Z M1177.6 470.0L1180.0 479.7L1187.3 489.4L1192.1 501.5L1197.0 513.6L1199.4 528.1L1206.6 540.2L1216.3 549.9L1221.2 562.0L1223.6 574.2L1226.0 583.8L1235.7 588.7L1243.0 596.0L1250.0 598.4L1250.0 720.0L1046.8 720.0L1041.9 712.7L1032.2 710.3L1022.5 712.7L1012.9 710.3L1003.2 705.5L995.9 695.8L986.2 690.9L981.4 681.2L983.8 671.5L976.5 664.3L964.4 663.1L954.7 661.8L945.0 664.3L935.3 661.8L932.9 649.3L935.3 634.7L941.4 620.2L942.6 605.7L940.2 591.1L937.8 579.0L940.2 566.9L937.8 554.8L930.5 551.1L920.8 552.4L908.7 553.6L896.6 552.4L886.9 549.9L886.9 518.4L932.9 496.6L945.0 497.9L954.7 499.1L962.0 494.2L969.3 487.0L981.4 485.5L991.1 483.1L1000.7 480.7L1012.9 478.2L1022.5 475.8L1032.2 473.4L1039.5 470.0Z M886.9 502.5L932.9 495.3L940.2 497.7L949.9 500.1L959.6 496.5L969.3 490.4L981.4 485.6L991.1 483.2L1000.7 480.7L1012.9 478.3L1022.5 475.9L1032.2 473.5L1039.5 463.8L1044.3 454.1L1054.0 454.1L1061.3 454.1L1063.7 444.4L1062.5 432.3L1068.6 422.6L1080.7 419.0L1087.9 412.9L1104.9 409.3L1124.3 408.1L1138.8 406.9L1146.1 400.8L1150.9 397.2L1163.0 399.6L1172.7 400.8L1173.9 410.5L1171.5 420.2L1175.2 429.9L1180.0 437.1L1182.4 449.3L1177.6 454.1L1172.7 461.4L1177.6 471.1L1180.0 480.7L1180.0 492.9L1187.3 502.5L1192.1 512.2L1194.5 520.0L886.9 520.0Z M940.0 482.6L948.9 480.8L957.7 475.5L968.4 477.2L977.2 478.1L984.3 473.7L993.2 473.7L1000.3 477.2L1007.4 471.9L1012.7 466.6L1019.8 463.1L1028.7 461.3L1039.3 459.5L1042.9 454.2L1050.0 452.4L1060.6 453.3L1064.2 447.1L1065.9 440.0L1168.8 440.0L1170.6 450.6L1174.1 457.7L1177.7 466.6L1175.9 475.5L1181.2 482.6L1188.3 486.1L1193.6 493.2L1197.2 503.8L1200.7 514.5L1206.0 523.4L1213.1 532.2L1216.7 541.1L1223.8 546.4L1230.9 553.5L1236.2 562.4L1238.0 571.2L1241.5 578.3L1250.4 581.9L1259.2 587.2L1268.1 589.0L1280.0 590.8L1280.0 623.0L940.0 623.0Z M1226.4 580.0L1233.7 587.3L1243.3 592.1L1257.9 594.5L1267.6 599.4L1277.3 604.2L1287.0 606.6L1291.8 616.3L1296.6 628.4L1301.5 638.1L1303.9 647.8L1306.3 659.9L1303.9 672.0L1291.8 676.9L1279.7 679.3L1267.6 674.5L1257.9 676.9L1256.7 679.3L1248.2 686.6L1238.5 693.8L1228.8 701.1L1224.0 708.4L1214.3 710.8L1204.6 715.7L1199.7 725.3L1194.9 735.0L1190.1 730.2L1180.4 720.5L1170.7 715.7L1161.0 718.1L1153.7 725.3L1146.5 730.2L1141.6 720.5L1131.9 715.7L1122.2 720.5L1117.4 727.8L1107.7 725.3L1098.0 727.8L1088.3 722.9L1081.1 715.7L1073.8 725.3L1071.4 735.0L1064.1 739.9L1056.8 730.2L1049.6 720.5L1039.9 722.9L1030.2 727.8L1020.5 725.3L1010.8 722.9L1001.1 718.1L996.3 708.4L986.6 701.1L984.2 689.0L981.7 676.9L976.9 667.2L962.4 664.8L952.7 662.4L934.5 664.8L933.3 652.7L935.7 638.1L940.6 623.6L943.0 609.1L941.8 594.5L943.0 580.0Z"/>
<path fill="#a5d27a" d="M1520.7 377.8L1520.7 415.3L1496.5 420.2L1486.8 426.2L1483.1 420.2L1474.7 415.3L1468.6 408.1L1472.2 398.4L1484.3 391.1L1494.0 377.8Z M1230.0 605.7L1244.5 608.1L1259.1 610.5L1271.2 606.9L1280.9 610.5L1284.5 620.2L1290.6 625.0L1297.8 629.9L1299.0 639.6L1302.7 649.3L1305.1 658.9L1300.2 663.8L1290.6 661.4L1278.4 658.9L1268.8 661.4L1259.1 663.8L1254.2 666.2L1230.0 671.1Z M1305.1 640.0L1302.7 652.1L1293.0 659.4L1280.9 657.0L1268.8 659.4L1259.1 664.2L1254.2 666.6L1242.1 676.3L1230.0 678.8L1230.0 640.0Z M844.5 710.2L850.6 706.6L855.4 712.7L856.6 722.4L853.0 733.3L848.1 732.0L844.5 722.4Z M1250.0 640.0L1250.0 692.1L1238.1 696.9L1226.0 700.6L1213.9 703.0L1201.8 705.4L1189.7 709.0L1180.0 707.8L1170.3 705.4L1158.2 703.0L1148.5 700.6L1141.2 703.0L1129.1 698.1L1114.6 693.3L1109.7 686.0L1112.2 676.3L1112.2 664.2L1104.9 659.4L1090.4 661.8L1079.5 669.1L1080.7 688.4L1078.3 700.6L1071.0 693.3L1063.7 683.6L1054.0 678.8L1049.2 664.2L1041.9 658.2L1027.4 657.0L1015.3 655.7L1008.0 660.6L998.3 661.8L983.8 657.0L974.1 649.7L971.7 640.0Z M890.5 528.1L894.2 518.4L901.4 511.2L908.7 506.3L918.4 503.9L928.1 501.5L937.8 500.3L945.0 508.8L945.0 518.4L937.8 528.1L932.9 540.2L925.7 545.1L920.8 549.9L911.1 547.5L901.4 542.7L894.2 537.8Z M896.6 520.0L903.8 508.6L920.8 503.8L935.3 502.5L945.0 508.6L947.5 520.0Z M974.1 520.0L976.5 509.8L983.8 502.5L993.5 500.1L1003.2 502.5L1015.3 497.7L1022.5 490.4L1034.7 483.2L1046.8 475.9L1058.9 471.1L1071.0 468.6L1080.7 463.8L1090.4 461.4L1095.2 449.3L1097.6 439.6L1104.9 432.3L1114.6 434.7L1117.0 444.4L1129.1 446.8L1141.2 451.7L1153.3 458.9L1163.0 471.1L1167.9 483.2L1175.2 497.7L1177.6 509.8L1180.0 520.0Z M969.3 530.6L964.5 520.9L970.2 510.9L973.7 502.1L980.8 498.5L993.2 496.8L1000.3 491.4L1010.9 491.4L1019.8 487.9L1028.7 484.3L1039.3 480.8L1050.0 475.5L1060.6 471.9L1071.2 470.2L1081.9 471.9L1090.8 466.6L1094.3 457.7L1096.1 448.9L1099.6 443.5L1106.7 440.0L1147.5 440.0L1151.1 456.0L1149.3 463.1L1152.8 470.2L1158.2 477.2L1163.5 486.1L1167.0 496.8L1168.8 507.4L1175.9 518.0L1183.0 525.1L1184.8 535.8L1188.3 546.4L1191.9 553.5L1190.1 564.2L1188.3 573.0L1193.6 578.3L1202.5 581.9L1213.1 581.9L1222.0 587.2L1223.8 594.3L1230.9 599.6L1241.5 603.2L1250.4 604.9L1259.2 608.5L1264.6 615.6L1269.9 623.0L979.0 623.0L976.5 617.7L974.1 605.7L969.3 595.9L969.3 583.8L964.5 574.1L957.2 569.3L954.7 559.7L959.5 552.4L969.3 547.5L974.1 540.2Z M1209.4 580.0L1211.9 592.1L1219.1 599.4L1228.8 601.8L1238.5 606.6L1248.2 611.5L1257.9 618.8L1262.7 628.4L1265.2 640.6L1262.7 652.7L1257.9 662.4L1248.2 664.8L1238.5 662.4L1228.8 664.8L1219.1 669.6L1214.3 676.9L1209.4 686.6L1202.2 696.3L1190.1 698.7L1177.9 703.5L1165.8 706.0L1153.7 706.0L1146.5 701.1L1136.8 703.5L1127.1 706.0L1117.4 701.1L1110.1 693.8L1102.9 686.6L1093.2 689.0L1088.3 698.7L1081.1 703.5L1078.6 696.3L1073.8 689.0L1066.5 681.7L1059.3 676.9L1052.0 669.6L1047.1 657.5L1035.0 656.3L1022.9 655.1L1010.8 657.5L1001.1 662.4L989.0 664.8L976.9 662.4L972.0 652.7L974.5 643.0L976.9 628.4L974.5 616.3L976.9 604.2L974.5 592.1L969.6 580.0Z"/>
<path fill="#86c062" d="M1494.0 397.2L1497.7 403.2L1496.5 412.9L1488.0 416.6L1480.7 410.5L1481.9 402.0L1489.2 396.0Z M1230.0 612.9L1242.1 615.3L1254.2 617.8L1261.5 625.0L1263.9 637.1L1261.5 649.3L1256.6 661.4L1244.5 663.8L1230.0 666.2Z M1259.1 640.0L1260.3 652.1L1254.2 661.8L1242.1 664.2L1230.0 664.2L1230.0 640.0Z M872.4 710.2L878.4 704.2L886.9 701.8L890.5 709.0L889.3 717.5L883.3 724.8L876.0 721.1L872.4 715.1Z M1250.0 640.0L1250.0 688.4L1238.1 693.3L1226.0 695.7L1216.3 698.1L1206.6 700.6L1197.0 700.6L1187.3 704.2L1180.0 703.0L1170.3 700.6L1158.2 698.1L1153.3 688.4L1148.5 681.2L1138.8 686.0L1141.2 693.3L1141.2 703.0L1129.1 698.1L1114.6 693.3L1109.7 686.0L1112.2 676.3L1112.2 664.2L1104.9 659.4L1090.4 661.8L1080.7 654.5L1080.7 640.0Z M1003.2 640.0L1000.7 649.7L988.6 652.1L976.5 649.7L974.1 640.0Z M901.4 513.6L911.1 506.3L923.2 506.3L930.5 511.2L929.3 520.9L923.2 528.1L916.0 533.0L908.7 528.1L903.8 523.3Z M1008.0 520.0L1017.7 509.8L1029.8 505.0L1041.9 500.1L1054.0 492.9L1066.1 485.6L1075.8 480.7L1087.9 482.0L1100.1 483.2L1114.6 483.2L1129.1 488.0L1141.2 495.3L1148.5 502.5L1153.3 512.2L1158.2 520.0Z M970.2 562.4L975.5 553.5L980.8 542.9L982.6 532.2L986.1 521.6L993.2 514.5L1002.1 509.2L1010.9 503.8L1016.3 500.3L1028.7 495.0L1039.3 489.7L1050.0 486.1L1064.2 484.3L1076.6 480.8L1087.2 484.3L1099.6 483.5L1110.3 484.3L1124.5 486.1L1136.9 489.7L1145.7 496.8L1152.8 507.4L1158.2 518.0L1161.7 528.7L1165.2 541.1L1168.8 553.5L1175.9 560.6L1177.7 569.5L1174.1 580.1L1168.8 587.2L1163.5 592.5L1175.9 594.3L1188.3 592.5L1197.2 596.1L1206.0 599.6L1216.7 603.2L1223.8 610.3L1227.3 617.4L1228.2 623.0L996.8 623.0L993.2 613.8L986.1 599.6L978.1 586.5L971.0 573.0Z M1174.1 580.0L1179.9 588.0L1202.2 590.9L1223.5 595.0L1233.7 601.8L1243.3 609.1L1253.0 618.8L1257.9 628.4L1260.3 638.1L1257.9 647.8L1253.0 655.1L1243.3 657.5L1231.2 657.5L1219.1 662.4L1211.9 672.0L1204.6 681.7L1194.9 686.6L1187.6 691.4L1180.4 696.3L1170.7 698.7L1158.6 696.3L1153.7 689.0L1148.9 681.7L1139.2 686.6L1141.6 693.8L1141.6 703.5L1129.5 698.7L1115.0 693.8L1110.1 686.6L1112.5 676.9L1112.5 667.2L1102.9 664.8L1093.2 669.6L1085.9 676.9L1081.1 681.7L1078.6 672.0L1068.9 664.8L1059.3 659.9L1049.6 650.2L1037.5 647.8L1025.3 647.8L1015.7 650.2L1006.0 652.7L993.8 650.2L986.6 643.0L989.0 628.4L984.2 616.3L986.6 604.2L984.2 592.1L979.3 580.0Z"/>
<path fill="#6ab04a" d="M1230.0 634.7L1237.3 639.6L1242.1 649.3L1237.3 654.1L1230.0 656.5Z M1189.7 640.0L1187.3 654.5L1177.6 664.2L1172.7 671.5L1160.6 676.3L1148.5 678.8L1138.8 676.3L1134.0 669.1L1134.0 657.0L1124.3 654.5L1117.0 652.1L1114.6 640.0Z M984.3 539.3L987.9 528.7L998.5 519.8L1009.2 510.9L1019.8 507.4L1034.0 502.1L1046.4 498.5L1060.6 496.8L1071.2 493.2L1080.1 487.9L1089.0 491.4L1099.6 491.4L1110.3 493.2L1122.7 495.0L1133.3 500.3L1140.4 509.2L1145.7 518.0L1151.1 528.7L1154.6 539.3L1158.2 550.0L1163.5 560.6L1168.8 564.2L1168.8 571.2L1163.5 580.1L1156.4 587.2L1149.3 590.8L1140.4 597.9L1136.9 604.9L1140.4 610.3L1142.2 617.4L1144.0 623.0L1042.9 623.0L1046.4 615.6L1039.3 610.3L1032.2 606.7L1023.4 599.6L1014.5 594.3L1007.4 587.2L998.5 581.9L993.2 574.8L987.9 567.7L989.7 560.6L986.1 550.0Z M1144.0 580.0L1141.6 587.3L1139.2 594.5L1141.6 604.2L1151.3 611.5L1161.0 616.3L1163.4 626.0L1165.8 635.7L1170.7 628.4L1177.9 621.2L1185.2 623.6L1192.5 618.8L1197.3 610.3L1204.6 609.1L1211.9 613.9L1219.1 621.2L1228.8 628.4L1238.5 640.6L1240.9 651.5L1233.7 647.8L1224.0 638.1L1214.3 633.3L1202.2 635.7L1192.5 638.1L1182.8 643.0L1177.9 650.2L1175.5 662.4L1168.3 672.0L1156.1 676.9L1144.0 676.9L1134.3 674.5L1131.9 664.8L1119.8 659.9L1112.5 652.7L1102.9 650.2L1090.7 649.0L1078.6 645.4L1066.5 640.6L1054.4 635.7L1044.7 628.4L1042.3 616.3L1035.0 611.5L1025.3 604.2L1015.7 599.4L1006.0 594.5L996.3 589.7L993.8 580.0Z"/>
<path fill="#52a038" d="M996.8 530.5L1010.9 512.7L1016.3 514.5L1025.1 518.0L1035.8 519.8L1044.6 526.9L1053.5 519.8L1064.2 514.5L1074.8 510.9L1081.9 501.2L1092.5 503.8L1103.2 507.4L1115.6 510.9L1120.9 518.0L1128.0 525.1L1135.1 532.2L1136.9 541.1L1138.6 550.0L1144.0 560.6L1146.6 571.2L1142.2 576.6L1135.1 580.1L1131.5 583.7L1117.4 578.3L1106.7 580.1L1103.2 587.2L1097.9 592.5L1092.5 601.4L1089.0 596.1L1081.9 594.3L1071.2 596.1L1064.2 599.6L1057.1 596.1L1048.2 587.2L1042.9 576.6L1039.3 567.7L1034.0 560.6L1028.7 553.5L1021.6 546.4L1014.5 539.3L1010.9 532.2L1003.8 532.2Z M1102.9 580.0L1105.3 587.3L1098.0 592.1L1093.2 599.4L1088.3 604.2L1083.5 597.0L1073.8 598.2L1064.1 599.4L1054.4 597.0L1047.1 589.7L1044.7 580.0Z"/>
<path fill="#389428" d="M1046.4 548.2L1053.5 544.6L1062.4 541.1L1067.7 534.0L1074.8 526.9L1085.4 523.4L1096.1 525.1L1102.3 530.5L1103.2 539.3L1106.7 546.4L1108.5 553.5L1115.6 551.7L1124.5 553.5L1128.0 557.1L1124.5 562.4L1117.4 566.8L1108.5 567.7L1103.2 571.2L1096.1 574.8L1089.0 578.3L1078.3 580.1L1067.7 581.0L1060.6 578.3L1053.5 573.0L1051.7 565.9L1053.5 558.8L1048.2 553.5Z"/>
</g>
</svg></div>
<div id="rb" class="abs"></div>
<div id="bb" class="abs"></div>
<div class="sp" style="left:0;width:100px;padding-left:5px;letter-spacing:-0.3px">MapsID: 3891</div>
<div class="sp" style="left:102px;width:78px;padding-left:1px">png</div>
<div class="sp" style="left:182px;width:98px;padding-left:1px">MinZoom: 8</div>
<div class="sp" style="left:282px;width:98px;padding-left:1px">MaxZoom: 18</div>
<div class="sp" style="left:382px;width:98px;padding-left:1px">TileSize: 256</div>
<div class="sp" style="left:482px;width:98px;padding-left:1px;letter-spacing:-0.55px">EPSG:3857</div>
<div class="sp" style="left:582px;width:1338px;padding-left:1px;letter-spacing:-0.02px">Longitude=9.387817, Latitude=46.460566, tile=8/134/90.png</div>

</body>
</html>
